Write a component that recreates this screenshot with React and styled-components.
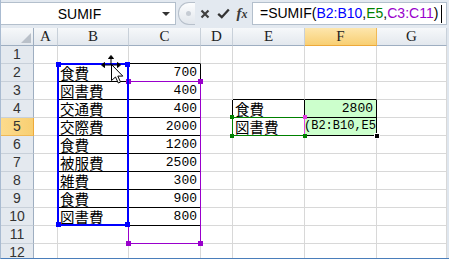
import React from 'react';
import styled, { createGlobalStyle, css } from 'styled-components';

const GlobalStyle = createGlobalStyle`
  html, body { margin: 0; padding: 0; background: #fff; }
  body { font-family: "Liberation Sans", Arial, sans-serif; }
`;

const COLS = ['A', 'B', 'C', 'D', 'E', 'F', 'G'];
const ROWS = 12;

const VALUES = {
  B2: '食費', C2: 700,
  B3: '図書費', C3: 400,
  B4: '交通費', C4: 400,
  B5: '交際費', C5: 2000,
  B6: '食費', C6: 1200,
  B7: '被服費', C7: 2500,
  B8: '雑費', C8: 300,
  B9: '食費', C9: 900,
  B10: '図書費', C10: 800,
  E4: '食費', F4: 2800,
  E5: '図書費',
};

// bordered blocks, column index A=1
const TABLES = [
  { c0: 2, c1: 3, r0: 2, r1: 10 },
  { c0: 5, c1: 6, r0: 4, r1: 5 },
];
const FILLED = ['F4', 'F5'];
const EDIT_CELL = 'F5';

const rightBlack = (c, r) =>
  TABLES.some((t) => c >= t.c0 - 1 && c <= t.c1 && r >= t.r0 && r <= t.r1);
const bottomBlack = (c, r) =>
  TABLES.some((t) => c >= t.c0 && c <= t.c1 && r >= t.r0 - 1 && r <= t.r1);

const Window = styled.div`
  width: 449px;
  height: 259px;
  box-sizing: border-box;
  overflow: hidden;
  background: #dfe6ee;
  border-left: 1px solid #a9bbd1;
  border-bottom: 1px solid #4a7ebb;
  display: flex;
  flex-direction: column;
`;

const FormulaBar = styled.div`
  flex: none;
  height: 28px;
  box-sizing: border-box;
  padding: 2px 2px 3px 0;
  display: flex;
  background: #e3e9f0;
`;

const NameBox = styled.div`
  width: 175px;
  box-sizing: border-box;
  background: #fff;
  border: 1px solid #b3bfcc;
  border-left: none;
  display: flex;
  align-items: center;
`;

const NameText = styled.span`
  flex: 1;
  text-align: center;
  font-size: 14px;
  color: #000;
`;

const DropArrow = styled.span`
  width: 0;
  height: 0;
  margin: 1px 5px 0 4px;
  border-left: 4px solid transparent;
  border-right: 4px solid transparent;
  border-top: 4px solid #333;
`;

const Grip = styled.div`
  width: 17px;
  margin-left: 2px;
  box-sizing: border-box;
  border: 1px solid #b7c0cb;
  border-right: none;
  border-radius: 11px 0 0 11px;
  background: linear-gradient(#fcfdfe, #e1e6ec);
  display: flex;
  align-items: center;
  justify-content: center;
`;

const GripDot = styled.span`
  width: 5px;
  height: 5px;
  margin-left: 2px;
  border-radius: 50%;
  background: #c6ccd4;
`;

const IconSlot = styled.div`
  width: ${(p) => p.$w}px;
  display: flex;
  align-items: center;
  justify-content: center;
  color: #333;
`;

const Fx = styled.span`
  font-family: "Liberation Serif", serif;
  font-style: italic;
  font-weight: bold;
  font-size: 15px;
  color: #3a3a3a;
  & > small { font-size: 12px; }
`;

const FormulaInput = styled.div`
  flex: 1;
  box-sizing: border-box;
  background: #fff;
  border: 1px solid #b3bfcc;
  padding-left: 7px;
  font-size: 14px;
  line-height: 21px;
  white-space: nowrap;
  display: flex;
  align-items: center;
`;

const Ref = styled.span`
  color: ${(p) => p.$color};
`;

const Caret = styled.span`
  display: inline-block;
  width: 1px;
  height: 18px;
  margin-left: 3px;
  background: #000;
`;

const Sheet = styled.div`
  position: relative;
  display: grid;
  grid-template-columns: 33px 24px 71px 72px 32px 72px 72px 70px;
  grid-template-rows: repeat(${ROWS + 1}, 18px);
  width: 446px;
  background: #fff;
`;

const Corner = styled.div`
  grid-column: 1;
  grid-row: 1;
  position: relative;
  box-sizing: border-box;
  border-right: 1px solid #9eaec1;
  border-bottom: 1px solid #9eaec1;
  background: linear-gradient(#f6f8fa, #e3e8ee);
  &::after {
    content: '';
    position: absolute;
    right: 2px;
    bottom: 2px;
    border-left: 10px solid transparent;
    border-bottom: 10px solid #b9c0c9;
  }
`;

const ColHead = styled.div`
  grid-column: ${(p) => p.$col};
  grid-row: 1;
  box-sizing: border-box;
  border-right: 1px solid #c8d0d9;
  border-bottom: 1px solid #9eaec1;
  background: linear-gradient(#f6f8fa, #e3e8ee);
  font-family: "Liberation Serif", serif;
  font-size: 15px;
  line-height: 17px;
  text-align: center;
  color: #222;
  ${(p) => p.$active && css`
    background: linear-gradient(#fde6ad, #f8cf73);
    border-right-color: #f0b956;
    border-bottom-color: #eda93a;
  `}
`;

const RowHead = styled.div`
  grid-column: 1;
  grid-row: ${(p) => p.$row};
  box-sizing: border-box;
  border-right: 1px solid #9eaec1;
  border-bottom: 1px solid #c8d0d9;
  background: #e4e9ef;
  font-size: 14px;
  line-height: 17px;
  text-align: center;
  color: #333;
  ${(p) => p.$active && css`
    background: linear-gradient(90deg, #fcdb8d, #f8cf72);
    border-right-color: #eda93a;
    border-bottom-color: #f0b956;
  `}
`;

const Cell = styled.div`
  grid-column: ${(p) => p.$col};
  grid-row: ${(p) => p.$row};
  box-sizing: border-box;
  min-width: 0;
  border-right: 1px solid ${(p) => (p.$right ? '#000' : '#d8d8d8')};
  border-bottom: 1px solid ${(p) => (p.$bottom ? '#000' : '#d8d8d8')};
  background: ${(p) => (p.$fill ? '#ccffcc' : '#fff')};
  padding: 0 3px 0 2px;
  white-space: nowrap;
  color: #000;
  font-family: "Noto Sans CJK JP", sans-serif;
  font-size: 14.5px;
  line-height: 17px;
  ${(p) => p.$num && css`
    text-align: right;
    font-family: "Liberation Mono", monospace;
    font-size: 13px;
  `}
  ${(p) => p.$edit && css`
    padding: 0;
    overflow: hidden;
    text-indent: -1px;
    font-family: "Liberation Mono", monospace;
    font-size: 12px;
  `}
`;

const Range = styled.div`
  grid-column: ${(p) => p.$col};
  grid-row: ${(p) => p.$row};
  position: relative;
  z-index: ${(p) => p.$z};
  margin: -1px 0 0 -1px;
  border: ${(p) => p.$w}px solid ${(p) => p.$color};
  ${(p) => p.$rightColor && css`border-right-color: ${p.$rightColor};`}
  pointer-events: none;
`;

const Handle = styled.span`
  position: absolute;
  width: ${(p) => p.$size}px;
  height: ${(p) => p.$size}px;
  background: ${(p) => p.$color};
  ${(p) => (p.$y === 't' ? 'top' : 'bottom')}: ${(p) => p.$off}px;
  ${(p) => (p.$x === 'l' ? 'left' : 'right')}: ${(p) => p.$off}px;
`;

const FillHandle = styled.span`
  position: absolute;
  right: -3px;
  bottom: -3px;
  width: 4px;
  height: 4px;
  background: #000;
  outline: 1px solid #fff;
`;

const Cursor = styled.svg`
  position: absolute;
  left: 100px;
  top: 27px;
  z-index: 10;
  overflow: visible;
`;

const corners = ['tl', 'tr', 'bl', 'br'];

function Selection({ col, row, color, width, size, off, z, rightColor, handleColors }) {
  return (
    <Range $col={col} $row={row} $color={color} $w={width} $z={z} $rightColor={rightColor}>
      {corners.map((k, i) => (
        <Handle
          key={k}
          $y={k[0]}
          $x={k[1]}
          $size={size}
          $off={off}
          $color={handleColors ? handleColors[i] : color}
        />
      ))}
    </Range>
  );
}

export default function App() {
  const cells = [];
  for (let r = 1; r <= ROWS; r++) {
    COLS.forEach((name, i) => {
      const c = i + 1;
      const id = `${name}${r}`;
      const v = id === EDIT_CELL ? '(B2:B10,E5' : VALUES[id];
      cells.push(
        <Cell
          key={id}
          $col={c + 1}
          $row={r + 1}
          $right={rightBlack(c, r)}
          $bottom={bottomBlack(c, r)}
          $fill={FILLED.includes(id)}
          $num={typeof v === 'number'}
          $edit={id === EDIT_CELL}
        >
          {v}
        </Cell>
      );
    });
  }

  return (
    <>
      <GlobalStyle />
      <Window>
        <FormulaBar>
          <NameBox>
            <NameText>SUMIF</NameText>
            <DropArrow />
          </NameBox>
          <Grip><GripDot /></Grip>
          <IconSlot $w={19}>
            <svg width="10" height="10" viewBox="0 0 10 10">
              <path d="M1.5 1.5 L8.5 8.5 M8.5 1.5 L1.5 8.5" stroke="#404040" strokeWidth="2.2" />
            </svg>
          </IconSlot>
          <IconSlot $w={18}>
            <svg width="13" height="11" viewBox="0 0 13 11">
              <path d="M1.2 5.8 L4.8 9.2 L11.8 1.5" fill="none" stroke="#333" strokeWidth="2.3" />
            </svg>
          </IconSlot>
          <IconSlot $w={20}>
            <Fx>f<small>x</small></Fx>
          </IconSlot>
          <FormulaInput>
            =SUMIF(<Ref $color="#0000ff">B2:B10</Ref>,<Ref $color="#008000">E5</Ref>,
            <Ref $color="#9900cc">C3:C11</Ref>)<Caret />
          </FormulaInput>
        </FormulaBar>

        <Sheet>
          <Corner />
          {COLS.map((name, i) => (
            <ColHead key={name} $col={i + 2} $active={name === 'F'}>{name}</ColHead>
          ))}
          {Array.from({ length: ROWS }).map((_, i) => (
            <RowHead key={i} $row={i + 2} $active={i + 1 === 5}>{i + 1}</RowHead>
          ))}
          {cells}

          <Selection col="4 / 5" row="4 / 13" color="#9900cc" width={1} size={5} off={-3} z={2} />
          <Selection col="3 / 4" row="3 / 12" color="#0000ff" width={2} size={5} off={-3} z={3} />
          <Selection
            col="6 / 7"
            row="6 / 7"
            color="#008000"
            width={1}
            size={4}
            off={-3}
            z={2}
            rightColor="#e040e0"
            handleColors={['#008000', '#e040e0', '#008000', '#008000']}
          />
          <Range $col="7 / 8" $row="6 / 7" $color="transparent" $w={1} $z={4}>
            <FillHandle />
          </Range>

          <Cursor width="24" height="30" viewBox="0 0 24 30">
            <g stroke="#000" strokeWidth="1" fill="#000">
              <path d="M10 3 L10 10 M3 10 L17 10" fill="none" />
              <path d="M10 0.5 L7.5 3.5 L12.5 3.5 Z" />
              <path d="M0.5 10 L3.5 7.5 L3.5 12.5 Z" />
              <path d="M19.5 10 L16.5 7.5 L16.5 12.5 Z" />
            </g>
            <path
              transform="translate(10.5 9.5)"
              d="M0 0 L0 16 L4 12.5 L6.8 18.5 L9 17.5 L6.3 11.6 L11.3 11.6 Z"
              fill="#fff"
              stroke="#000"
              strokeWidth="1"
            />
          </Cursor>
        </Sheet>
      </Window>
    </>
  );
}
